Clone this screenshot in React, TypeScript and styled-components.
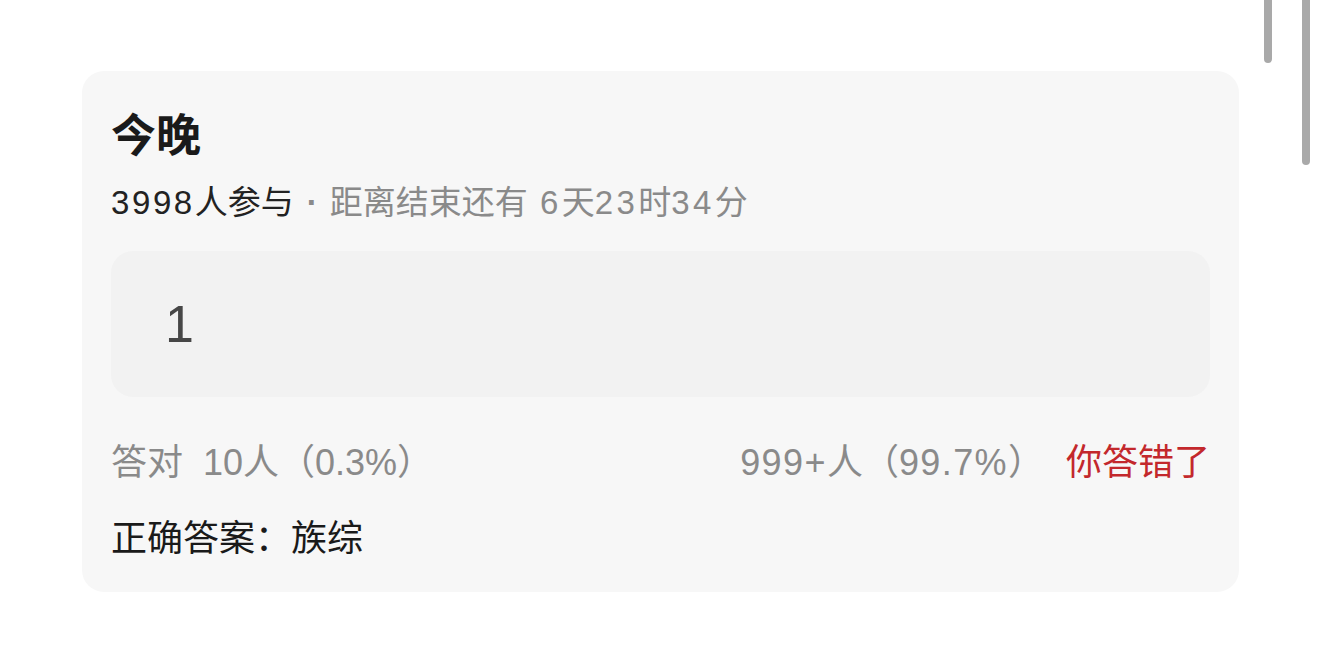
import React from "react";
import styled, { createGlobalStyle } from "styled-components";

const Global = createGlobalStyle`
  html, body { margin: 0; padding: 0; background: #ffffff; }
  body {
    font-family: "Liberation Sans", "Noto Sans CJK SC", sans-serif;
    -webkit-font-smoothing: antialiased;
  }
`;

const Page = styled.div`
  position: relative;
  width: 1320px;
  height: 646px;
  overflow: hidden;
  box-sizing: border-box;
  padding: 71px 81px 0 82px;
  background: #ffffff;
`;

const Card = styled.section`
  background: #f7f7f7;
  border-radius: 22px;
  padding: 34px 29px 29px 29px;
  display: flex;
  flex-direction: column;
`;

const Title = styled.h1`
  margin: 0;
  font-family: "Noto Sans CJK SC", sans-serif;
  font-size: 45px;
  line-height: 56px;
  font-weight: 700;
  color: #1a1a1a;
`;

const Meta = styled.div`
  margin-top: 20px;
  font-size: 33px;
  line-height: 44px;
  color: #8a8a8a;
  white-space: nowrap;
  word-spacing: 3px;
`;

const Strong = styled.span`
  color: #222222;
`;

const Num = styled.span<{ $spacing: number }>`
  letter-spacing: ${(p) => p.$spacing}px;
`;

const Dot = styled.span`
  margin: 0 12px 0 13px;
  font-weight: 700;
`;

const AnswerBox = styled.div`
  margin-top: 26px;
  height: 146px;
  border-radius: 22px;
  background: #f2f2f2;
  display: flex;
  align-items: center;
  padding-left: 54px;
  font-size: 52px;
  color: #474747;
`;

const StatsRow = styled.div`
  margin-top: 42px;
  display: flex;
  justify-content: space-between;
  align-items: center;
  font-size: 36px;
  line-height: 48px;
  color: #8a8a8a;
  white-space: nowrap;
`;

const Group = styled.div<{ $gap?: number }>`
  display: flex;
  align-items: center;
  gap: ${(p) => p.$gap ?? 0}px;
`;

const Wrong = styled.span`
  color: #c3282c;
`;

const Correct = styled.div`
  margin-top: 28px;
  font-size: 36px;
  line-height: 48px;
  color: #1a1a1a;
`;

const ScrollBar = styled.div<{ $left: number; $h: number }>`
  position: absolute;
  top: -10px;
  left: ${(p) => p.$left}px;
  width: 8px;
  height: ${(p) => p.$h + 10}px;
  border-radius: 4px;
  background: #a9a9a9;
`;

export default function App() {
  return (
    <>
      <Global />
      <Page>
        <Card>
          <Title>今晚</Title>
          <Meta>
            <Strong>
              <Num $spacing={2.6}>3998</Num>人参与
            </Strong>
            <Dot>·</Dot>距离结束还有 <Num $spacing={3.4}>6</Num>天
            <Num $spacing={3.4}>23</Num>时<Num $spacing={3.4}>34</Num>分
          </Meta>
          <AnswerBox>1</AnswerBox>
          <StatsRow>
            <Group $gap={20}>
              <span>答对</span>
              <span>10人（0.3%）</span>
            </Group>
            <Group $gap={22}>
              <span>
                <Num $spacing={1.4}>999+</Num>人（<Num $spacing={1.4}>99.7%</Num>）
              </span>
              <Wrong>你答错了</Wrong>
            </Group>
          </StatsRow>
          <Correct>正确答案：族综</Correct>
        </Card>
        <ScrollBar $left={1264} $h={63} />
        <ScrollBar $left={1302} $h={165} />
      </Page>
    </>
  );
}
